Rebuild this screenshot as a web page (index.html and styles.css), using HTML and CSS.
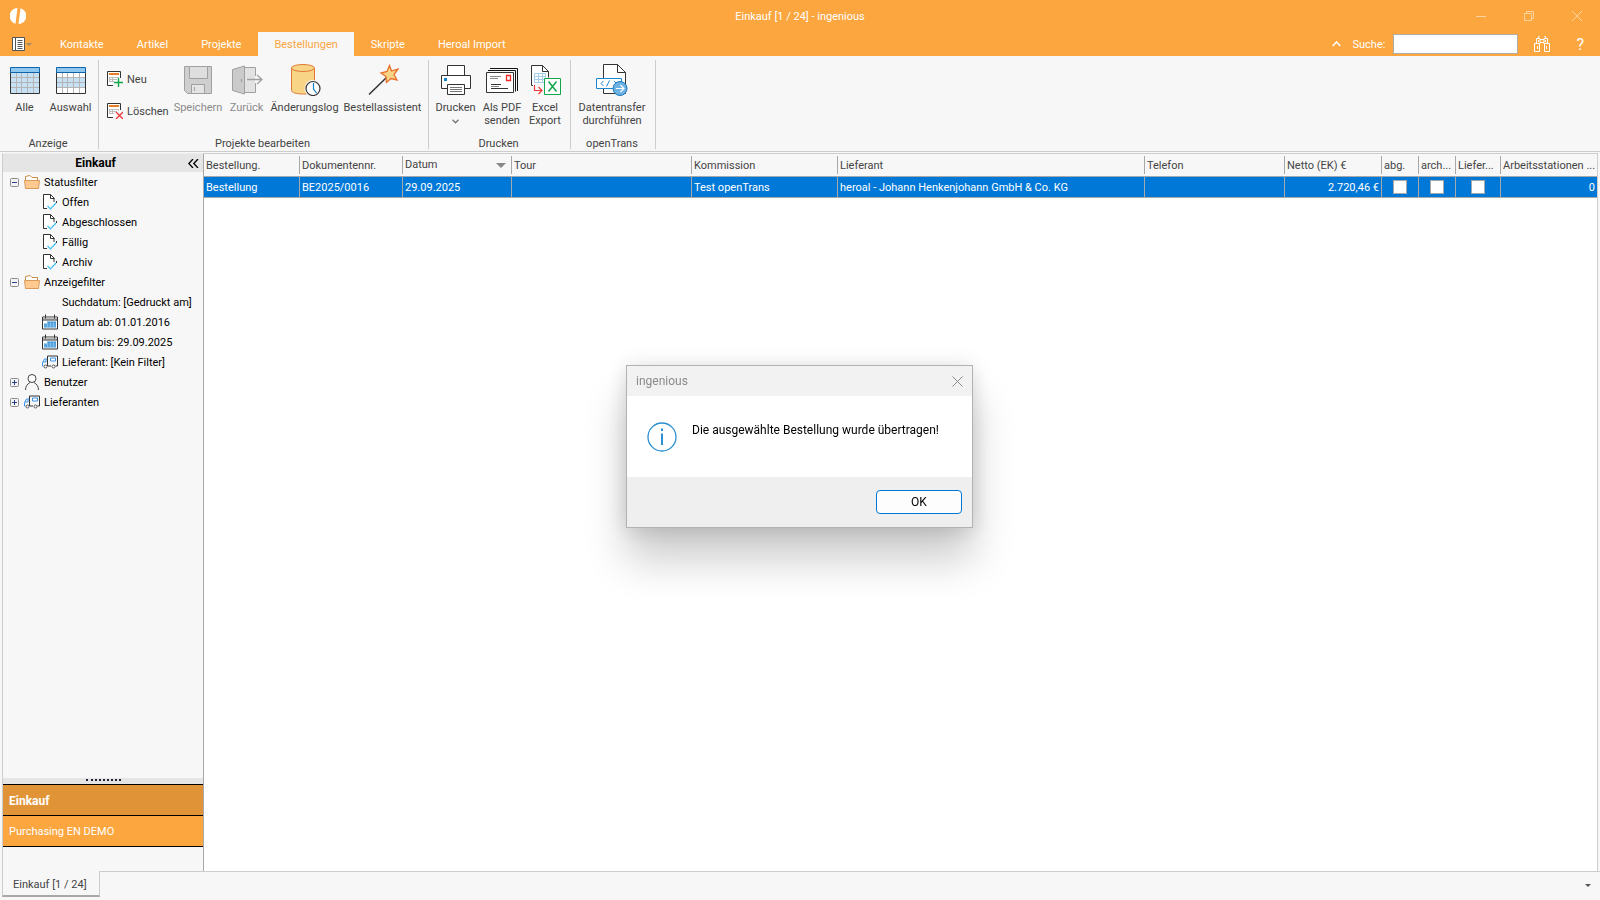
FILE: index.html
```html
<!DOCTYPE html>
<html lang="de">
<head>
    <meta charset="UTF-8">
    <meta name="viewport" content="width=device-width, initial-scale=1.0">
    <title>Einkauf [1 / 24] - ingenious</title>
    <link rel="stylesheet" href="styles.css">
</head>
<body>
    <!-- Shared icons -->
    <svg class="sprite" aria-hidden="true">
        <symbol id="i-folder" viewBox="0 0 16 14">
            <path d="M1.5 7V1.5L6 .5l2 2h5.500V7" fill="#fff" stroke="#c98a45"/>
            <path d="M.5 5.500h15l-1 8h-13z" fill="#ffc98f" stroke="#d99a5b"/>
        </symbol>
        <symbol id="i-doc" viewBox="0 0 16 16">
            <path d="M5 14.500H1.500V.500h7l3.500 3.500v4" fill="#fff" stroke="#333"/>
            <path d="M8.500.500V4.500H12.500" fill="none" stroke="#333"/>
            <path d="M5.500 12l3 3 5.500-6" fill="none" stroke="#3fc1ee" stroke-width="1.200"/>
            <path d="M14.500 7v2" stroke="#333"/>
        </symbol>
        <symbol id="i-calendar" viewBox="0 0 16 15">
            <path d="M.500 2.500h15v12H.500z" fill="#fff" stroke="#333"/>
            <path d="M1 3h14v2H1z" fill="#bbb"/>
            <path d="M.500 5.500h15M3.500 0v4M12.500 0v4" stroke="#333"/>
            <path d="M5 7h9v2H5zM2 9h12v4H2z" fill="#3a93d6"/>
            <path d="M2 9.500h12M2 11.500h12M5.500 7v6M8.500 7v6M11.500 7v6" stroke="#a6d2f2" stroke-width=".6"/>
        </symbol>
        <symbol id="i-truck" viewBox="0 0 16 13">
            <path d="M5.500 10.500V.500h10v10h-2M6 10.500h3" fill="none" stroke="#333"/>
            <path d="M8.500 2.500h5v3h-5z" fill="#fff" stroke="#3a93e6"/>
            <path d="M5 3.500H2.500l-2 3.500v3.500h1M1 6.500h3V4" fill="none" stroke="#3a93e6"/>
            <circle cx="3.500" cy="11" r="1.500" fill="#fff" stroke="#555"/>
            <circle cx="11.500" cy="11" r="1.500" fill="#fff" stroke="#555"/>
        </symbol>
        <symbol id="i-user" viewBox="0 0 16 16">
            <circle cx="8" cy="4.500" r="4" fill="#fff" stroke="#444"/>
            <path d="M1.500 16c0-4 2-6 4.500-7.500M14.500 16c0-4-2-6-4.500-7.500" fill="none" stroke="#444"/>
        </symbol>
        <symbol id="i-minus" viewBox="0 0 9 9">
            <rect x=".5" y=".5" width="8" height="8" rx="1" fill="#f4f4f4" stroke="#8c8c8c"/>
            <path d="M2 4.500h5" stroke="#27408b"/>
        </symbol>
        <symbol id="i-plus" viewBox="0 0 9 9">
            <rect x=".5" y=".5" width="8" height="8" rx="1" fill="#f4f4f4" stroke="#8c8c8c"/>
            <path d="M2 4.500h5M4.500 2v5" stroke="#27408b"/>
        </symbol>
        <symbol id="i-form" viewBox="0 0 16 16">
            <path d="M6 14.500H.500V.500h13V7" fill="#fff" stroke="#333"/>
            <path d="M2 2h10v2H2z" fill="#ee7d22"/>
            <path d="M2 6h10v1H2zM2 6h1v5H2zM2 8h8v1H2zM2 10h5v1H2zM5 6h1v5H5zM11 6h1v2h-1z" fill="#bbb"/>
        </symbol>
    </svg>

    <header class="titlebar">
        <svg class="logo" width="16" height="16" viewBox="0 0 16 16">
            <path d="M7.500 0A8 8 0 0 0 5.500 15.700zM10.500.3A8 8 0 0 1 8.500 16z" fill="#fff"/>
        </svg>
        <span class="window-title">Einkauf [1 / 24] - ingenious</span>
        <div class="window-buttons">
            <button aria-label="Minimieren"><svg width="10" height="10"><path d="M0 5.500h10"/></svg></button>
            <button aria-label="Verkleinern"><svg width="10" height="10"><path d="M.5 2.500h7v7h-7zM2.500 2.500v-2h7v7h-2" /></svg></button>
            <button aria-label="Schließen"><svg width="10" height="10"><path d="M0 0l10 10M10 0L0 10"/></svg></button>
        </div>
    </header>

    <nav class="tabbar">
        <button class="app-menu" aria-label="Menü">
            <svg width="20" height="14" viewBox="0 0 20 14">
                <path d="M.5.500h12v13H.500z" fill="#fff" stroke="#555"/>
                <path d="M3.500 0v14M5.500 3.500h5M5.500 5.500h5M5.500 7.500h5M5.500 9.500h5M5.500 11.500h5" stroke="#555"/>
                <path d="M14 6h6l-3 3z" fill="#a08a6c"/>
            </svg>
        </button>
        <a class="tab" href="#">Kontakte</a>
        <a class="tab" href="#">Artikel</a>
        <a class="tab" href="#">Projekte</a>
        <a class="tab active" href="#">Bestellungen</a>
        <a class="tab" href="#">Skripte</a>
        <a class="tab" href="#">Heroal Import</a>
        <div class="search">
            <button aria-label="Menüband einklappen"><svg width="9" height="6"><path d="M.700 5l3.800-4 3.800 4" fill="none" stroke="#fff" stroke-width="1.500"/></svg></button>
            <label for="search">Suche:</label>
            <input type="text" id="search">
            <button class="find" aria-label="Suchen">
                <svg width="16" height="16" viewBox="0 0 16 16" fill="none" stroke="#fff">
                    <path d="M.500 7.500h5v8h-5zM10.500 7.500h5v8h-5zM3.500 10v3M12.500 10v3M2.500 7V2.500h3.500v5M13.500 7V2.500H10v5M4.500 2V.500h1M11.500 2V.500h-1M6 3.500h4M6 6.500h4M4.500 4v2M11.500 4v2"/>
                </svg>
            </button>
            <button class="help" aria-label="Hilfe">?</button>
        </div>
    </nav>

    <section class="ribbon">
        <div class="group">
            <div class="group-items">
                <button class="item w-all">
                    <svg width="32" height="32" viewBox="0 0 32 32">
                        <path d="M2 9h28v20H2z" fill="#c5e1f3"/>
                        <path d="M2 13.500h28M2 18.500h28M2 23.500h28M7.500 9v20M12.500 9v20M18.500 9v20M24.500 9v20" stroke="#b4b4b4"/>
                        <path d="M1.500 8v21.500h29V8" fill="none" stroke="#333"/>
                        <path d="M1.500 3.500h29v5h-29z" fill="#8fc8ee" stroke="#0f64ad"/>
                    </svg>
                    <span>Alle</span>
                </button>
                <button class="item w-selection">
                    <svg width="32" height="32" viewBox="0 0 32 32">
                        <path d="M2 9h28v20H2z" fill="#fff"/>
                        <path d="M2 14h28v10H2z" fill="#c5e1f3"/>
                        <path d="M2 13.500h28M2 18.500h28M2 23.500h28M7.500 9v20M12.500 9v20M18.500 9v20M24.500 9v20" stroke="#b4b4b4"/>
                        <path d="M1.500 8v21.500h29V8" fill="none" stroke="#333"/>
                        <path d="M1.500 3.500h29v5h-29z" fill="#8fc8ee" stroke="#0f64ad"/>
                    </svg>
                    <span>Auswahl</span>
                </button>
            </div>
            <div class="group-label">Anzeige</div>
        </div>
        <div class="group">
            <div class="group-items">
                <div class="small-items">
                    <button class="small-item">
                        <svg width="16" height="16" viewBox="0 0 16 16"><use href="#i-form"/><path d="M11.500 7v9M7 11.500h9" stroke="#12a64a" stroke-width="1.400"/></svg>
                        <span>Neu</span>
                    </button>
                    <button class="small-item">
                        <svg width="16" height="16" viewBox="0 0 16 16"><use href="#i-form"/><path d="M9 9l7 7M16 9l-7 7" stroke="#ee3a3a" stroke-width="1.400"/></svg>
                        <span>Löschen</span>
                    </button>
                </div>
                <button class="item w-save" disabled>
                    <svg width="32" height="32" viewBox="0 0 32 32" stroke="#a0a0a0">
                        <path d="M2.500 2.500h27v27h-24l-3-3z" fill="#cfcfcf"/>
                        <path d="M7.500 2.500h18v12h-18z" fill="#dedede"/>
                        <path d="M9.500 20.500h13v9h-13z" fill="#e4e4e4"/>
                        <path d="M12.500 23v4"/>
                    </svg>
                    <span>Speichern</span>
                </button>
                <button class="item w-back" disabled>
                    <svg width="32" height="32" viewBox="0 0 32 32" stroke="#a0a0a0">
                        <path d="M14 4h10v24H14z" fill="#e2e2e2" stroke="none"/>
                        <path d="M13.500 3.500h11V12M24.500 19v9.500h-11" fill="none"/>
                        <path d="M1.500 5.500l12-3.500v28l-12-3.500z" fill="#cacaca"/>
                        <path d="M16 15.500h14M26 11l5 4.500-5 4.500M10.500 15v3" fill="none" stroke-width="1.300"/>
                    </svg>
                    <span>Zurück</span>
                </button>
                <button class="item w-log">
                    <svg width="32" height="32" viewBox="0 0 32 32">
                        <path d="M2.500 4v22.500c0 2 5 3.500 12 3.500s11-1.500 11-3.500V4" fill="#f8d487" stroke="#e07a35"/>
                        <ellipse cx="14" cy="4" rx="11.500" ry="3.500" fill="#f8d487" stroke="#e07a35"/>
                        <circle cx="24" cy="24.500" r="8.500" fill="#f7f7f7"/>
                        <circle cx="24" cy="24.500" r="7" fill="#fff" stroke="#333" stroke-width="1.200"/>
                        <path d="M24.500 19v6l3 4" fill="none" stroke="#0f7cc8" stroke-width="1.200"/>
                    </svg>
                    <span>Änderungslog</span>
                </button>
                <button class="item w-wizard">
                    <svg width="32" height="32" viewBox="0 0 32 32">
                        <path d="M2 30.500L20 13" stroke="#333" stroke-width="1.500"/>
                        <path d="M22.500 1.500l2 5.500 6.500-2-4 5.500 3 5.500-6-1.500-4.500 4-.500-6-5-3.500 6-1.500z" fill="#f8d487" stroke="#e8702a" stroke-width="1.300"/>
                    </svg>
                    <span>Bestellassistent</span>
                </button>
            </div>
            <div class="group-label">Projekte bearbeiten</div>
        </div>
        <div class="group">
            <div class="group-items">
                <button class="item w-print">
                    <svg width="32" height="32" viewBox="0 0 32 32" fill="#fff" stroke="#333">
                        <path d="M7.500 11V1.500h17V11"/>
                        <path d="M7.500 24.500h-6v-13h29v13h-6"/>
                        <path d="M7.500 20.500h17v10h-17z"/>
                        <path d="M10 23.500h12M10 25.500h12M10 27.500h12" stroke="#777"/>
                        <path d="M4 14h3v3H4z" fill="#1583d0" stroke="none"/>
                    </svg>
                    <span>Drucken</span>
                    <svg width="7" height="5"><path d="M.500.800l3 3 3-3" fill="none" stroke="#777" stroke-width="1.300"/></svg>
                </button>
                <button class="item w-pdf">
                    <svg width="32" height="32" viewBox="0 0 32 32">
                        <path d="M4 4.500h27.500V27M2 6.500h27.500v21" fill="none" stroke="#111"/>
                        <path d="M.500 8.500h27v20H.500z" fill="#fff" stroke="#333"/>
                        <path d="M4 12.500h11M4 14.500h8" stroke="#888"/>
                        <path d="M5 20.500h10M5 24.500h17" stroke="#333"/>
                        <path d="M5 22.500h8" stroke="#888"/>
                        <path d="M20.500 11.500h4v5h-4z" fill="#fff" stroke="#ee2a2a" stroke-width="1.300"/>
                    </svg>
                    <span>Als PDF senden</span>
                </button>
                <button class="item w-excel">
                    <svg width="32" height="32" viewBox="0 0 32 32">
                        <path d="M4 21.500H2.500v-20h11l6 6v6" fill="#fff" stroke="#333"/>
                        <path d="M13.500 1.500v6h6" fill="none" stroke="#333"/>
                        <path d="M5.500 9.500h11v9h-11zM5.500 12.500h11M5.500 15.500h11M9.500 9.500v9M13.500 9.500v9" fill="#fff" stroke="#a3cfea"/>
                        <path d="M5.500 21v5.500h7M9.500 23l3.500 3.500-3.500 3.500" fill="none" stroke="#ee3a3a" stroke-width="1.200"/>
                        <path d="M15.500 14.500h16v16h-16z" fill="#fff" stroke="#12a64a"/>
                        <path d="M19.500 17.500l8 10M27.500 17.500l-8 10" stroke="#12a64a" stroke-width="1.500"/>
                    </svg>
                    <span>Excel Export</span>
                </button>
            </div>
            <div class="group-label">Drucken</div>
        </div>
        <div class="group">
            <div class="group-items">
                <button class="item w-transfer">
                    <svg width="32" height="32" viewBox="0 0 32 32">
                        <path d="M7.500 29.500V.500h14l8 8v21z" fill="#fff" stroke="#333"/>
                        <path d="M21.500.500v8h8" fill="none" stroke="#333"/>
                        <path d="M.500 14.500h25v10H.500z" fill="#fff" stroke="#1c86cf"/>
                        <path d="M7.500 17L5 19.500 7.500 22M18 17l2.500 2.500L18 22M13.500 16.500l-3 6" fill="none" stroke="#1c86cf"/>
                        <circle cx="24" cy="24.500" r="7" fill="#6db2e2" stroke="#1c76bd"/>
                        <path d="M20 24.500h8M24.500 21l3.500 3.500-3.500 3.500" fill="none" stroke="#fff" stroke-width="1.200"/>
                    </svg>
                    <span>Datentransfer durchführen</span>
                </button>
            </div>
            <div class="group-label">openTrans</div>
        </div>
    </section>

    <main class="workspace">
        <aside class="sidebar">
            <div class="sidebar-header">
                <h2>Einkauf</h2>
                <button aria-label="Einklappen"><svg width="11" height="9"><path d="M5 0L.800 4.500 5 9M10 0L5.800 4.500 10 9" fill="none" stroke="#000" stroke-width="1.300"/></svg></button>
            </div>
            <ul class="tree">
                <li><svg class="toggle"><use href="#i-minus"/></svg><svg class="icon"><use href="#i-folder"/></svg>Statusfilter</li>
                <li class="child"><svg class="icon"><use href="#i-doc"/></svg>Offen</li>
                <li class="child"><svg class="icon"><use href="#i-doc"/></svg>Abgeschlossen</li>
                <li class="child"><svg class="icon"><use href="#i-doc"/></svg>Fällig</li>
                <li class="child"><svg class="icon"><use href="#i-doc"/></svg>Archiv</li>
                <li><svg class="toggle"><use href="#i-minus"/></svg><svg class="icon"><use href="#i-folder"/></svg>Anzeigefilter</li>
                <li class="child"><span class="icon"></span>Suchdatum: [Gedruckt am]</li>
                <li class="child"><svg class="icon"><use href="#i-calendar"/></svg>Datum ab: 01.01.2016</li>
                <li class="child"><svg class="icon"><use href="#i-calendar"/></svg>Datum bis: 29.09.2025</li>
                <li class="child"><svg class="icon"><use href="#i-truck"/></svg>Lieferant: [Kein Filter]</li>
                <li><svg class="toggle"><use href="#i-plus"/></svg><svg class="icon"><use href="#i-user"/></svg>Benutzer</li>
                <li><svg class="toggle"><use href="#i-plus"/></svg><svg class="icon"><use href="#i-truck"/></svg>Lieferanten</li>
            </ul>
            <div class="splitter"><span></span></div>
            <a class="section active" href="#">Einkauf</a>
            <a class="section" href="#">Purchasing EN DEMO</a>
        </aside>

        <div class="grid">
            <table>
                <colgroup>
                    <col class="c-type"><col class="c-doc"><col class="c-date"><col class="c-tour"><col class="c-comm"><col class="c-supplier">
                    <col class="c-phone"><col class="c-net"><col class="c-flag"><col class="c-flag"><col class="c-deliver"><col>
                </colgroup>
                <thead>
                    <tr>
                        <th><div>Bestellung.</div></th>
                        <th><div>Dokumentennr.</div></th>
                        <th><div class="sorted">Datum</div></th>
                        <th><div>Tour</div></th>
                        <th><div>Kommission</div></th>
                        <th><div>Lieferant</div></th>
                        <th><div>Telefon</div></th>
                        <th><div>Netto (EK) €</div></th>
                        <th><div>abg.</div></th>
                        <th><div>arch...</div></th>
                        <th><div>Liefer...</div></th>
                        <th><div>Arbeitsstationen ...</div></th>
                    </tr>
                </thead>
                <tbody>
                    <tr>
                        <td>Bestellung</td>
                        <td>BE2025/0016</td>
                        <td>29.09.2025</td>
                        <td></td>
                        <td>Test openTrans</td>
                        <td>heroal - Johann Henkenjohann GmbH &amp; Co. KG</td>
                        <td></td>
                        <td class="number">2.720,46 €</td>
                        <td class="check"><input type="checkbox" aria-label="abg."></td>
                        <td class="check"><input type="checkbox" aria-label="arch..."></td>
                        <td class="check"><input type="checkbox" aria-label="Liefer..."></td>
                        <td class="number">0</td>
                    </tr>
                </tbody>
            </table>
        </div>
    </main>

    <footer class="window-tabs">
        <a class="window-tab" href="#">Einkauf [1 / 24]</a>
        <div class="window-tabs-rest">
            <button aria-label="Fensterliste"><svg width="6" height="3"><path d="M0 0h6L3 3z" fill="#555"/></svg></button>
        </div>
    </footer>

    <div class="overlay">
        <div class="dialog" role="dialog" aria-labelledby="dialog-title">
            <div class="dialog-title">
                <span id="dialog-title">ingenious</span>
                <button aria-label="Schließen"><svg width="11" height="11"><path d="M.500.500l10 10M10.500.500l-10 10" stroke="#8a8a8a"/></svg></button>
            </div>
            <div class="dialog-body">
                <svg width="30" height="30" viewBox="0 0 30 30">
                    <circle cx="15" cy="15" r="14" fill="none" stroke="#2a8fd0" stroke-width="1.300"/>
                    <path d="M15 11.500V23M15 6.500v2.500" stroke="#2a8fd0" stroke-width="2"/>
                </svg>
                <p>Die ausgewählte Bestellung wurde übertragen!</p>
            </div>
            <div class="dialog-footer">
                <button>OK</button>
            </div>
        </div>
    </div>
</body>
</html>
```

FILE: styles.css
```css
* {
    box-sizing: border-box;
}
body {
    margin: 0;
    height: 100vh;
    display: flex;
    flex-direction: column;
    font-family: Tahoma, Roboto, sans-serif;
    font-size: 11px;
    line-height: 13px;
    color: #444;
    background-color: #f7f7f7;
    overflow: hidden;
}
button {
    padding: 0;
    border: none;
    background: none;
    font: inherit;
    color: inherit;
}
a {
    color: inherit;
    text-decoration: none;
}
svg {
    display: block;
    flex: none;
}
.sprite {
    display: none;
}

/* Title bar and tabs */
.titlebar {
    height: 32px;
    display: grid;
    grid-template-columns: 1fr auto 1fr;
    align-items: center;
    padding: 0 10px;
    background-color: #fba63f;
    color: #fff;
}
.window-buttons {
    display: flex;
    justify-content: flex-end;
    gap: 38px;
    padding-right: 8px;
}
.window-buttons path {
    fill: none;
    stroke: #fdd3a0;
}
.tabbar {
    height: 24px;
    display: flex;
    gap: 1px;
    background-color: #fba63f;
    color: #fff;
}
.app-menu {
    width: 43px;
    padding-left: 12px;
}
.tab {
    padding: 0 16px;
    line-height: 26px;
}
.tab.active {
    background-color: #f7f7f7;
    color: #fba63f;
}
.search {
    margin-left: auto;
    display: flex;
    align-items: center;
    gap: 8px;
    padding-right: 16px;
}
.search label {
    margin-left: 4px;
}
.search input {
    width: 125px;
    height: 20px;
    padding: 0 4px;
    border: 1px solid #b0aca6;
    font: inherit;
}
.search .find {
    margin: 0 18px 0 8px;
}
.search .help {
    font-size: 16px;
}

/* Ribbon */
.ribbon {
    display: flex;
    height: 96px;
    padding: 4px 0 2px;
    border-bottom: 1px solid #cdcdcd;
}
.group {
    display: flex;
    flex-direction: column;
    justify-content: space-between;
    padding: 0 4px 0 2px;
    border-right: 1px solid #cdcdcd;
}
.group-items {
    display: flex;
    padding-top: 4px;
}
.group-label {
    text-align: center;
    line-height: 10px;
}
.item {
    display: flex;
    flex-direction: column;
    align-items: center;
    gap: 5px;
}
.item:disabled {
    color: #8a8a8a;
}
.w-all {
    width: 45px;
}
.w-selection {
    width: 47px;
}
.w-save {
    width: 54px;
}
.w-back {
    width: 43px;
}
.w-log {
    width: 73px;
}
.w-wizard {
    width: 83px;
}
.w-print {
    width: 49px;
}
.w-pdf {
    width: 44px;
}
.w-excel {
    width: 42px;
}
.w-transfer {
    width: 78px;
}
.small-items {
    width: 70px;
    display: flex;
    flex-direction: column;
    gap: 16px;
    padding: 7px 0 0 6px;
}
.small-item {
    display: flex;
    align-items: center;
    gap: 4px;
}

/* Sidebar */
.workspace {
    flex: 1;
    display: flex;
    min-height: 0;
    padding: 1px 2px 0;
}
.sidebar {
    width: 202px;
    display: flex;
    flex-direction: column;
    padding-bottom: 24px;
    border: 1px solid #cdcdcd;
    border-top-color: #ececec;
    border-right-color: #a8a8a8;
    border-bottom: none;
    color: #000;
}
.sidebar-header {
    height: 18px;
    display: flex;
    align-items: center;
    padding-right: 4px;
    background-color: #e5e5e5;
}
.sidebar-header h2 {
    flex: 1;
    margin: 0;
    font-size: 12px;
    text-align: center;
}
.tree {
    flex: 1;
    margin: 0;
    padding: 0;
    list-style: none;
}
.tree li {
    height: 20px;
    display: flex;
    align-items: center;
    gap: 4px;
    padding-left: 7px;
    white-space: nowrap;
}
.tree .child {
    padding-left: 39px;
}
.tree .toggle {
    width: 9px;
    height: 9px;
    margin-right: 1px;
}
.tree .icon {
    width: 16px;
    height: 16px;
}
.splitter {
    height: 6px;
    display: flex;
    justify-content: center;
    background-color: #e5e5e5;
}
.splitter span {
    width: 35px;
    margin-top: 1px;
    border-top: 2px dotted #223;
}
.section {
    height: 31px;
    padding-left: 6px;
    border-top: 1px solid #000;
    background-color: #fba63f;
    color: #fff;
    line-height: 32px;
}
.section.active {
    background-color: #e09437;
    font-size: 12px;
    font-weight: bold;
}
.section:last-child {
    height: 32px;
    border-bottom: 1px solid #000;
}

/* Order table */
.grid {
    flex: 1;
    min-width: 0;
    background-color: #fff;
    border: 1px solid #cdcdcd;
    border-width: 1px 1px 0 0;
}
table {
    width: 100%;
    table-layout: fixed;
    border-spacing: 0;
}
.c-type {
    width: 96px;
}
.c-doc {
    width: 103px;
}
.c-date {
    width: 109px;
}
.c-tour {
    width: 180px;
}
.c-comm {
    width: 146px;
}
.c-supplier {
    width: 307px;
}
.c-phone {
    width: 140px;
}
.c-net {
    width: 97px;
}
.c-flag {
    width: 37px;
}
.c-deliver {
    width: 45px;
}
th {
    padding: 2px 0;
    border-bottom: 1px solid #a8a8a8;
    background-color: #f7f7f7;
    font-weight: normal;
    text-align: left;
}
th div {
    height: 18px;
    padding: 0 2px;
    border-right: 1px solid #a8a8a8;
    line-height: 20px;
    white-space: nowrap;
}
th:last-child div,
td:last-child {
    border-right: none;
}
.sorted {
    display: flex;
    align-items: center;
    justify-content: space-between;
    padding-right: 5px;
}
.sorted::after {
    content: "";
    border: 5px solid transparent;
    border-top-color: #888;
    border-bottom: none;
}
td {
    height: 21px;
    padding: 0 2px;
    border-right: 1px solid #a8a8a8;
    border-bottom: 1px solid #a8a8a8;
    background-color: #0078d7;
    color: #fff;
    white-space: nowrap;
}
.number {
    text-align: right;
}
.check {
    text-align: center;
}
.check input {
    appearance: none;
    display: block;
    width: 14px;
    height: 14px;
    margin: 0 auto;
    border: 1px solid #a8a8a8;
    background-color: #fff;
}

/* Open windows */
.window-tabs {
    height: 29px;
    display: flex;
    padding: 0 0 3px 2px;
}
.window-tab {
    padding: 0 12px 0 10px;
    border: 1px solid #cdcdcd;
    border-top: none;
    border-bottom: 2px solid #a8a8a8;
    line-height: 28px;
}
.window-tabs-rest {
    flex: 1;
    display: flex;
    align-items: center;
    justify-content: flex-end;
    padding: 2px 9px 0 0;
    border-top: 1px solid #cdcdcd;
}

/* Message box */
.overlay {
    position: fixed;
    inset: 0;
    display: flex;
    align-items: center;
    justify-content: center;
    padding: 0 1px 7px 0;
    font-family: "Segoe UI", Roboto, sans-serif;
    font-size: 12px;
}
.dialog {
    width: 347px;
    border: 1px solid #b2b2b2;
    background-color: #fff;
    color: #000;
    box-shadow: 0 32px 40px rgba(0,0,0,0.2), 0 2px 20px rgba(0,0,0,0.15);
}
.dialog-title {
    height: 30px;
    display: flex;
    align-items: center;
    justify-content: space-between;
    padding: 0 9px;
    background-color: #f2f2f2;
    color: #8a8a8a;
}
.dialog-body {
    display: flex;
    gap: 15px;
    padding: 26px 20px 25px;
}
.dialog-body p {
    margin: 0;
    white-space: nowrap;
    line-height: 16px;
}
.dialog-footer {
    display: flex;
    justify-content: flex-end;
    padding: 13px 10px 13px;
    background-color: #efefef;
}
.dialog-footer button {
    width: 86px;
    height: 24px;
    border: 1px solid #0078d7;
    border-radius: 4px;
    background-color: #fdfdfd;
}
```
